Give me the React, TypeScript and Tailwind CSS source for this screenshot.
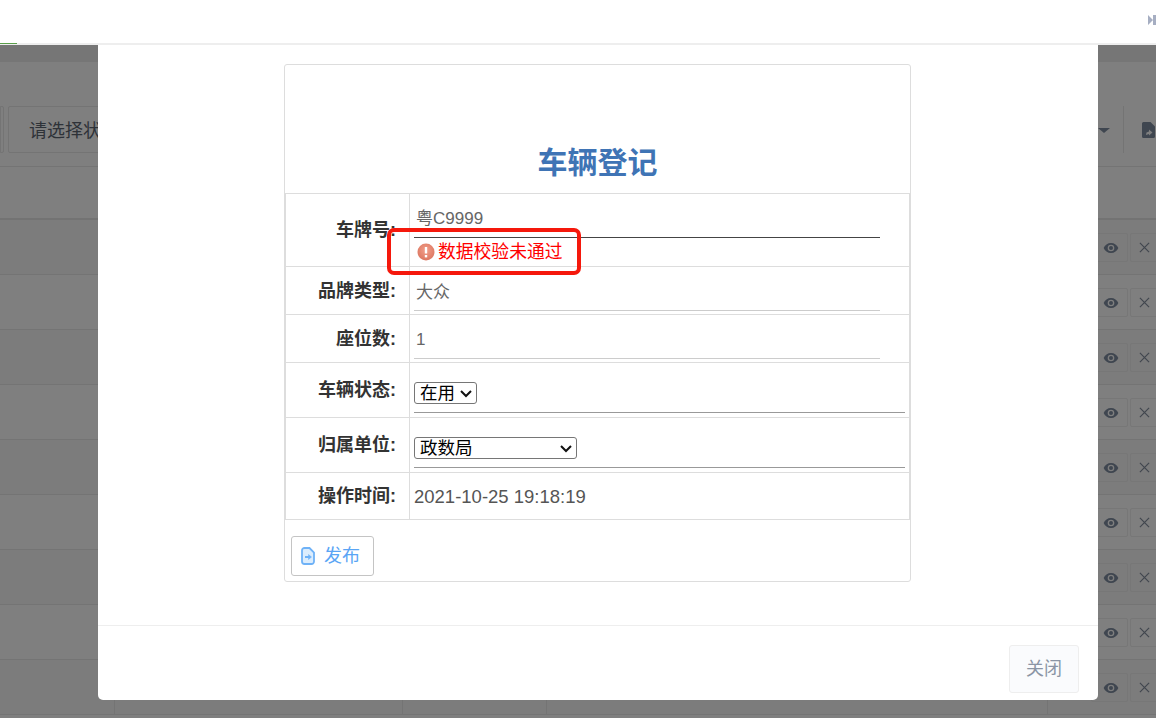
const rows = [0, 1, 2, 3, 4, 5, 6, 7, 8];

function EyeButtons() {
  return (
    <div className="flex justify-end gap-[2px] -mr-[2px]">
      <button className="w-[37px] h-[29px] rounded-[2px] border border-[#777777] flex items-center justify-end pr-[8px]">
        <svg width="16" height="16" viewBox="0 0 24 24" fill="#3f4650">
          <path d="M12 4.500C7 4.500 2.700 7.600 1 12c1.700 4.400 6 7.500 11 7.500s9.300-3.100 11-7.500c-1.700-4.400-6-7.500-11-7.500zM12 17a5 5 0 1 1 0-10 5 5 0 0 1 0 10zm0-8a3 3 0 1 0 0 6 3 3 0 0 0 0-6z" />
        </svg>
      </button>
      <button className="w-[28px] h-[29px] rounded-[2px] border border-[#777777] flex items-center justify-center">
        <svg width="11" height="11" viewBox="0 0 12 12" stroke="#42474f" strokeWidth="1.300">
          <path d="M1 1l10 10M11 1L1 11" />
        </svg>
      </button>
    </div>
  );
}

function Label({ children }: { children: React.ReactNode }) {
  return (
    <td className="w-[124px] border border-[#dddddd] pr-[13px] pt-[1px] text-right font-bold text-[18px] text-[#333333] align-middle">
      {children}
    </td>
  );
}

function Select({ value, width }: { value: string; width: string }) {
  return (
    <div className={`relative ${width}`}>
      <select className="block w-full h-[22px] border border-[#767676] rounded-[3px] pl-[5px] text-[17.500px] leading-[20px] text-black bg-white appearance-none">
        <option>{value}</option>
      </select>
      <svg className="absolute right-[5px] top-[8px]" width="12" height="8" viewBox="0 0 12 8" fill="none" stroke="#111111" strokeWidth="2">
        <path d="M1 1l5 5 5-5" />
      </svg>
    </div>
  );
}

export default function App() {
  return (
    <div className="relative h-[718px] w-[1156px] overflow-hidden bg-[#7f7f7f] font-['Liberation_Sans','Noto_Sans_CJK_SC',sans-serif]">
      {/* Top bar */}
      <div className="relative z-20 h-[45px] bg-white border-b-2 border-[#eeeeee] flex justify-end">
        <div className="absolute left-0 bottom-[-1px] w-[17px] h-[1px] bg-[#5a9e4a]" />
        <svg className="mt-[15px]" width="8" height="10" viewBox="0 0 8 10" fill="#a6aec2">
          <path d="M0 0l5 5-5 5zM5 0h3v10H5z" />
        </svg>
      </div>

      {/* Page behind the dialog */}
      <div className="h-[17px] bg-[#767676]" />
      <div className="h-[105px] border-b border-[#747474] flex items-start justify-between pt-[44px]">
        <div className="flex gap-[4px]">
          <div className="w-[4px] h-[47px] border border-[#747474] rounded-r-[2px]" />
          <div className="w-[120px] h-[47px] border border-[#747474] rounded-[2px] pl-[20px] pt-[3px] flex items-center text-[18px] text-[#2e3238] whitespace-nowrap overflow-hidden">
            请选择状态
          </div>
        </div>
        <div className="flex h-[47px]">
          <div className="w-[27px] flex items-center border-r border-[#747474]">
            <div className="ml-[1px] mt-[2px] border-x-[6px] border-x-transparent border-t-[5px] border-t-[#3f4650]" />
          </div>
          <div className="w-[32px] flex items-center pl-[18px]">
            <svg className="shrink-0" width="13" height="16" viewBox="0 0 13 16" fill="#3f4650" fillRule="evenodd">
              <path d="M1.500 0H8.500L13 4.500V14.500A1.500 1.500 0 0 1 11.500 16H1.500A1.500 1.500 0 0 1 0 14.500V1.500A1.500 1.500 0 0 1 1.500 0zM7 7.500l3.500 3-3.500 3V12l-3 1 .5-2.500 2.500-1z" />
            </svg>
          </div>
        </div>
      </div>
      <div className="h-[53px] border-b-2 border-[#737373]" />
      {rows.map((r) => (
        <div key={r} className={`h-[55px] border-b border-[#747474] flex ${r % 2 === 0 ? "bg-[#7c7c7c]" : "bg-[#7f7f7f]"}`}>
          <div className="w-[115px] border-r border-[#747474]" />
          <div className="w-[288px] border-r border-[#747474]" />
          <div className="w-[144px] border-r border-[#747474]" />
          <div className="w-[501px] border-r border-[#747474]" />
          <div className="flex-1 pt-[13px]">
            <EyeButtons />
          </div>
        </div>
      ))}

      {/* Dialog */}
      <div className="absolute z-10 left-[98px] top-[44px] w-[1000px] h-[656px] bg-white rounded-b-[5px] flex flex-col">
        <div className="h-[582px] border-b border-[#eeeeee] pl-[186px] pt-[20px]">
          <div className="w-[627px] h-[518px] border border-[#dddddd] rounded-[3px]">
            <h2 className="h-[128px] pt-[78px] text-center text-[30px] leading-[40px] font-bold text-[#3f74b5]">车辆登记</h2>
            <table className="w-[625px] border-collapse">
              <tbody>
                <tr className="h-[73px]">
                  <Label>车牌号:</Label>
                  <td className="relative border border-[#dddddd] pl-[4px] pr-[29px] align-top">
                    <div className="h-[44px] pt-[14px] pl-[2px] border-b border-[#444444] text-[17px] leading-[22px] text-[#666666]">粤C9999</div>
                    <div className="flex items-center pl-[3px] pt-[2px] text-[17.800px] leading-[24px] text-[#ff0000]">
                      <svg className="mr-[3px]" width="18" height="18" viewBox="0 0 18 18">
                        <defs>
                          <radialGradient id="err" cx="50%" cy="40%" r="60%">
                            <stop offset="0%" stopColor="#f2a08c" />
                            <stop offset="100%" stopColor="#dc7660" />
                          </radialGradient>
                        </defs>
                        <circle cx="9" cy="9" r="8.500" fill="url(#err)" />
                        <rect x="7.800" y="4" width="2.400" height="6.500" fill="#ffffff" />
                        <rect x="7.800" y="12" width="2.400" height="2.400" fill="#ffffff" />
                      </svg>
                      数据校验未通过
                    </div>
                  </td>
                </tr>
                <tr className="h-[48px]">
                  <Label>品牌类型:</Label>
                  <td className="border border-[#dddddd] pl-[4px] pr-[29px] align-top">
                    <div className="h-[44px] pt-[15px] pl-[2px] border-b border-[#cccccc] text-[17px] leading-[22px] text-[#666666]">大众</div>
                  </td>
                </tr>
                <tr className="h-[48px]">
                  <Label>座位数:</Label>
                  <td className="border border-[#dddddd] pl-[4px] pr-[29px] align-top">
                    <div className="h-[44px] pt-[14px] pl-[2px] border-b border-[#cccccc] text-[17px] leading-[22px] text-[#666666]">1</div>
                  </td>
                </tr>
                <tr className="h-[55px]">
                  <Label>车辆状态:</Label>
                  <td className="border border-[#dddddd] pl-[4px] pr-[4px] align-top">
                    <div className="h-[50px] pt-[19px] border-b border-[#999999]">
                      <Select value="在用" width="w-[63px]" />
                    </div>
                  </td>
                </tr>
                <tr className="h-[55px]">
                  <Label>归属单位:</Label>
                  <td className="border border-[#dddddd] pl-[4px] pr-[4px] align-top">
                    <div className="h-[50px] pt-[19px] border-b border-[#999999]">
                      <Select value="政数局" width="w-[163px]" />
                    </div>
                  </td>
                </tr>
                <tr className="h-[47px]">
                  <Label>操作时间:</Label>
                  <td className="border border-[#dddddd] pl-[4px] pt-[1px] text-[18.500px] text-[#555555] align-middle">2021-10-25 19:18:19</td>
                </tr>
              </tbody>
            </table>
            <button className="ml-[6px] mt-[16px] w-[83px] h-[40px] border border-[#c4c4c4] rounded-[3px] flex items-center pl-[9px] gap-[9px] text-[18px] text-[#5aa5f5]">
              <svg width="14" height="18" viewBox="0 0 14 18" fill="#dcedfd" stroke="#6fb2f7" strokeWidth="1.800">
                <path d="M1 3.500a2.500 2.500 0 0 1 2.500-2.500h5L13 5.500v9a2.500 2.500 0 0 1-2.500 2.500h-7A2.500 2.500 0 0 1 1 14.500z" />
                <path d="M4 10h4" strokeWidth="2" />
                <path d="M7.500 7.500l3 2.500-3 2.500z" fill="#6fb2f7" strokeWidth="0.500" />
              </svg>
              发布
            </button>
          </div>
        </div>
        <div className="flex-1 flex justify-end pt-[19px] pr-[19px]">
          <button className="w-[70px] h-[48px] border border-[#eeeeee] rounded-[3px] bg-[#fafbfd] text-[18px] text-[#8b95a5]">关闭</button>
        </div>
      </div>

      {/* Red annotation box */}
      <div className="absolute z-30 left-[387px] top-[228px] w-[194px] h-[47px] border-[4px] border-[#f5180c] rounded-[7px]" />
    </div>
  );
}
